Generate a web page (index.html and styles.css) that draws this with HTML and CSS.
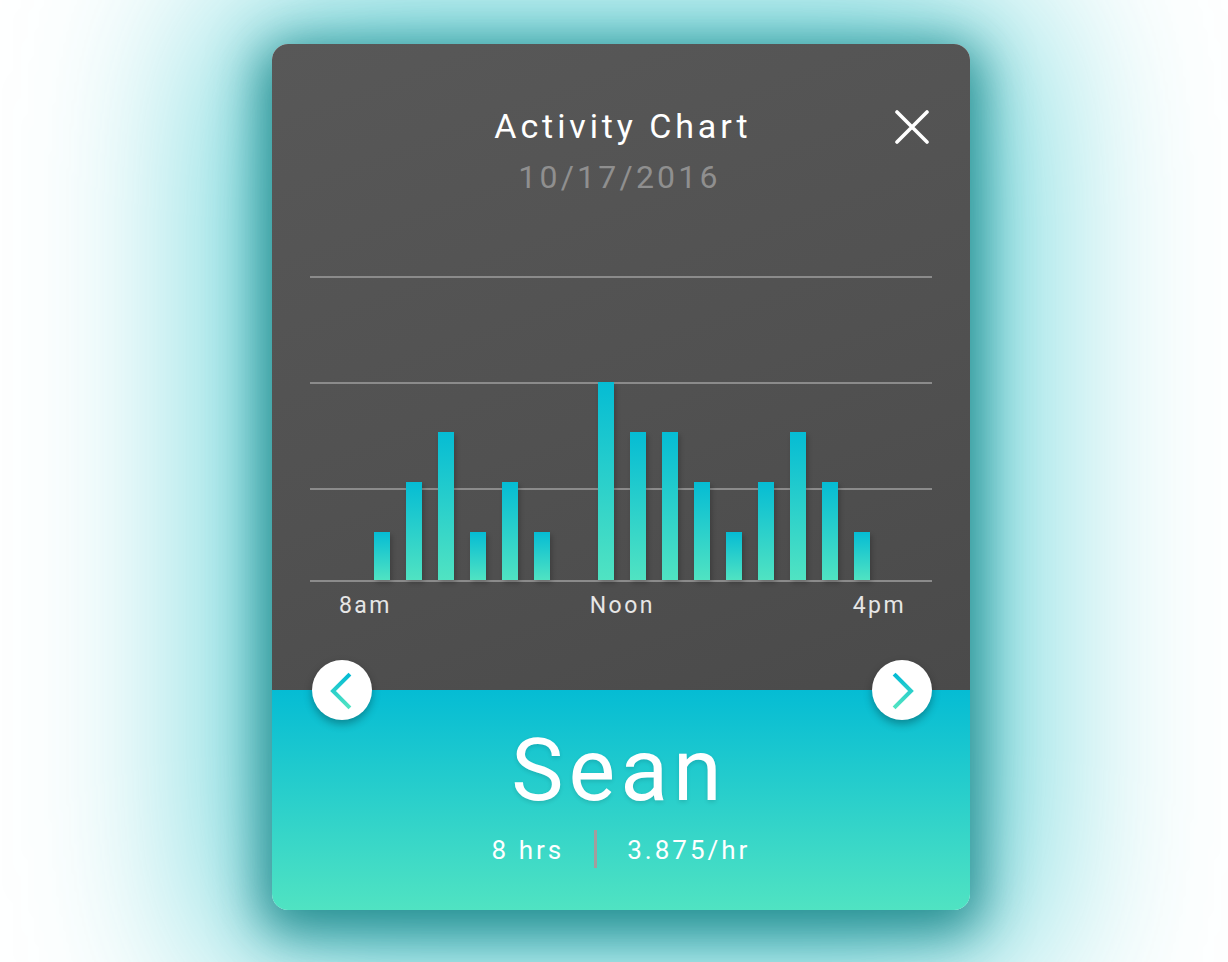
FILE: index.html
```html
<!DOCTYPE html>
<html lang="en">
<head>
<meta charset="utf-8">
<title>Activity Chart</title>
<link rel="stylesheet" href="styles.css">
</head>
<body>
<div class="stage">
  <div class="card">
    <section class="top">
      <header class="header">
        <div class="spacer"></div>
        <div class="heading">
          <h1 class="title">Activity Chart</h1>
          <div class="date">10/17/2016</div>
        </div>
        <button class="close" aria-label="Close">
          <svg width="34" height="34" viewBox="0 0 34 34"><path d="M2 2 L32 32 M32 2 L2 32" stroke="#fff" stroke-width="3.6" stroke-linecap="round" fill="none"/></svg>
        </button>
      </header>
      <div class="chart">
        <div class="plot">
          <div class="grid">
            <div class="gl gl-a"></div>
            <div class="gl gl-a"></div>
            <div class="gl gl-b"></div>
          </div>
          <div class="bars">
            <div class="bar" style="height:48px"></div>
            <div class="bar" style="height:98px"></div>
            <div class="bar" style="height:148px"></div>
            <div class="bar" style="height:48px"></div>
            <div class="bar" style="height:98px"></div>
            <div class="bar" style="height:48px"></div>
            <div class="bar empty" style="height:0px"></div>
            <div class="bar" style="height:198px"></div>
            <div class="bar" style="height:148px"></div>
            <div class="bar" style="height:148px"></div>
            <div class="bar" style="height:98px"></div>
            <div class="bar" style="height:48px"></div>
            <div class="bar" style="height:98px"></div>
            <div class="bar" style="height:148px"></div>
            <div class="bar" style="height:98px"></div>
            <div class="bar" style="height:48px"></div>
          </div>
        </div>
        <div class="axis">
          <span>8am</span>
          <span>Noon</span>
          <span>4pm</span>
        </div>
      </div>
    </section>
    <section class="bottom">
      <button class="nav nav-prev" aria-label="Previous">
        <svg width="60" height="60" viewBox="0 0 60 60">
          <defs>
            <linearGradient id="cg1" x1="0" y1="0" x2="0" y2="1">
              <stop offset="0" stop-color="#05bcd4"/>
              <stop offset="1" stop-color="#50e3c2"/>
            </linearGradient>
          </defs>
          <path d="M36.5 15.5 L21 31 L36.5 46.5" stroke="url(#cg1)" stroke-width="4" fill="none" stroke-linecap="square"/>
        </svg>
      </button>
      <button class="nav nav-next" aria-label="Next">
        <svg width="60" height="60" viewBox="0 0 60 60">
          <defs>
            <linearGradient id="cg2" x1="0" y1="0" x2="0" y2="1">
              <stop offset="0" stop-color="#05bcd4"/>
              <stop offset="1" stop-color="#50e3c2"/>
            </linearGradient>
          </defs>
          <path d="M23.5 15.5 L39 31 L23.5 46.5" stroke="url(#cg2)" stroke-width="4" fill="none" stroke-linecap="square"/>
        </svg>
      </button>
      <div class="name">Sean</div>
      <div class="stats">
        <span class="stat">8 hrs</span>
        <span class="divider"></span>
        <span class="stat">3.875/hr</span>
      </div>
    </section>
  </div>
</div>
</body>
</html>
```

FILE: styles.css
```css
* { box-sizing: border-box; }

html, body {
  margin: 0;
  padding: 0;
  background: #ffffff;
}

body {
  font-family: Roboto, "Liberation Sans", sans-serif;
  width: 1228px;
  height: 962px;
  overflow: hidden;
}

.stage {
  padding: 44px 0 0 272px;
}

.card {
  width: 698px;
  height: 866px;
  border-radius: 16px;
  overflow: hidden;
  display: flex;
  flex-direction: column;
  box-shadow:
    0 12px 50px 12px rgba(20, 128, 130, 0.85),
    0 10px 190px 60px rgba(50, 198, 204, 0.75);
}

.top {
  height: 646px;
  background: linear-gradient(160deg, #585858 0%, #515151 55%, #4a4a4a 100%);
  display: flex;
  flex-direction: column;
}

.header {
  display: grid;
  grid-template-columns: 1fr auto 1fr;
  padding: 62px 41px 0 41px;
  color: #fff;
}

.heading {
  display: flex;
  flex-direction: column;
  align-items: center;
}

.title {
  margin: 0;
  font-weight: 400;
  font-size: 34px;
  line-height: 40px;
  letter-spacing: 3.9px;
  padding-left: 3.9px;
  color: #ffffff;
}

.date {
  margin-top: 11px;
  font-size: 32px;
  line-height: 40px;
  letter-spacing: 3.2px;
  padding-right: 3px;
  color: #8f8f8f;
}

.close {
  justify-self: end;
  align-self: start;
  margin-top: 4px;
  width: 34px;
  height: 34px;
  padding: 0;
  border: 0;
  background: none;
  display: block;
}

.close svg { display: block; }

.chart {
  margin: 79px 38px 0 38px;
}

.plot {
  display: grid;
}

.grid, .bars {
  grid-area: 1 / 1;
}

.grid {
  display: flex;
  flex-direction: column;
}

.gl {
  border-top: 2px solid #8b8b8b;
}

.gl-a { height: 106px; }

.gl-b {
  height: 94px;
  border-bottom: 2px solid #8b8b8b;
}

.bars {
  height: 304px;
  display: flex;
  align-items: flex-end;
  gap: 16px;
  padding-left: 64px;
}

.bar {
  width: 16px;
  flex: 0 0 16px;
  background: linear-gradient(180deg, #05bcd4 0%, #50e3c2 100%);
  box-shadow: 2px 3px 5px rgba(0, 0, 0, 0.22);
}

.bar.empty { box-shadow: none; }

.axis {
  display: flex;
  justify-content: space-between;
  padding: 0 26px 0 29px;
  margin-top: 10px;
  font-size: 23px;
  line-height: 28px;
  letter-spacing: 2.4px;
  color: #e6e6e6;
}

.bottom {
  position: relative;
  flex: 1;
  background: linear-gradient(180deg, #05bcd4 0%, #50e3c2 100%);
  display: flex;
  flex-direction: column;
  align-items: center;
  padding-top: 30px;
  color: #fff;
}

.nav {
  position: absolute;
  top: -30px;
  width: 60px;
  height: 60px;
  border-radius: 50%;
  background: #ffffff;
  border: 0;
  padding: 0;
  box-shadow: 0 4px 8px rgba(0, 0, 0, 0.3);
}

.nav svg { display: block; }

.nav-prev { left: 40px; }
.nav-next { right: 38px; }

.name {
  font-size: 88px;
  line-height: 100px;
  font-weight: 400;
  letter-spacing: 5px;
  padding-right: 4px;
  text-shadow: 0 2px 4px rgba(0, 0, 0, 0.12);
}

.stats {
  margin-top: 10px;
  display: flex;
  align-items: center;
  gap: 30px;
  font-size: 26px;
  line-height: 40px;
  letter-spacing: 3px;
}

.stat { display: block; }

.divider {
  width: 3px;
  height: 38px;
  background: #a39d9d;
  margin-top: -2px;
}
```
